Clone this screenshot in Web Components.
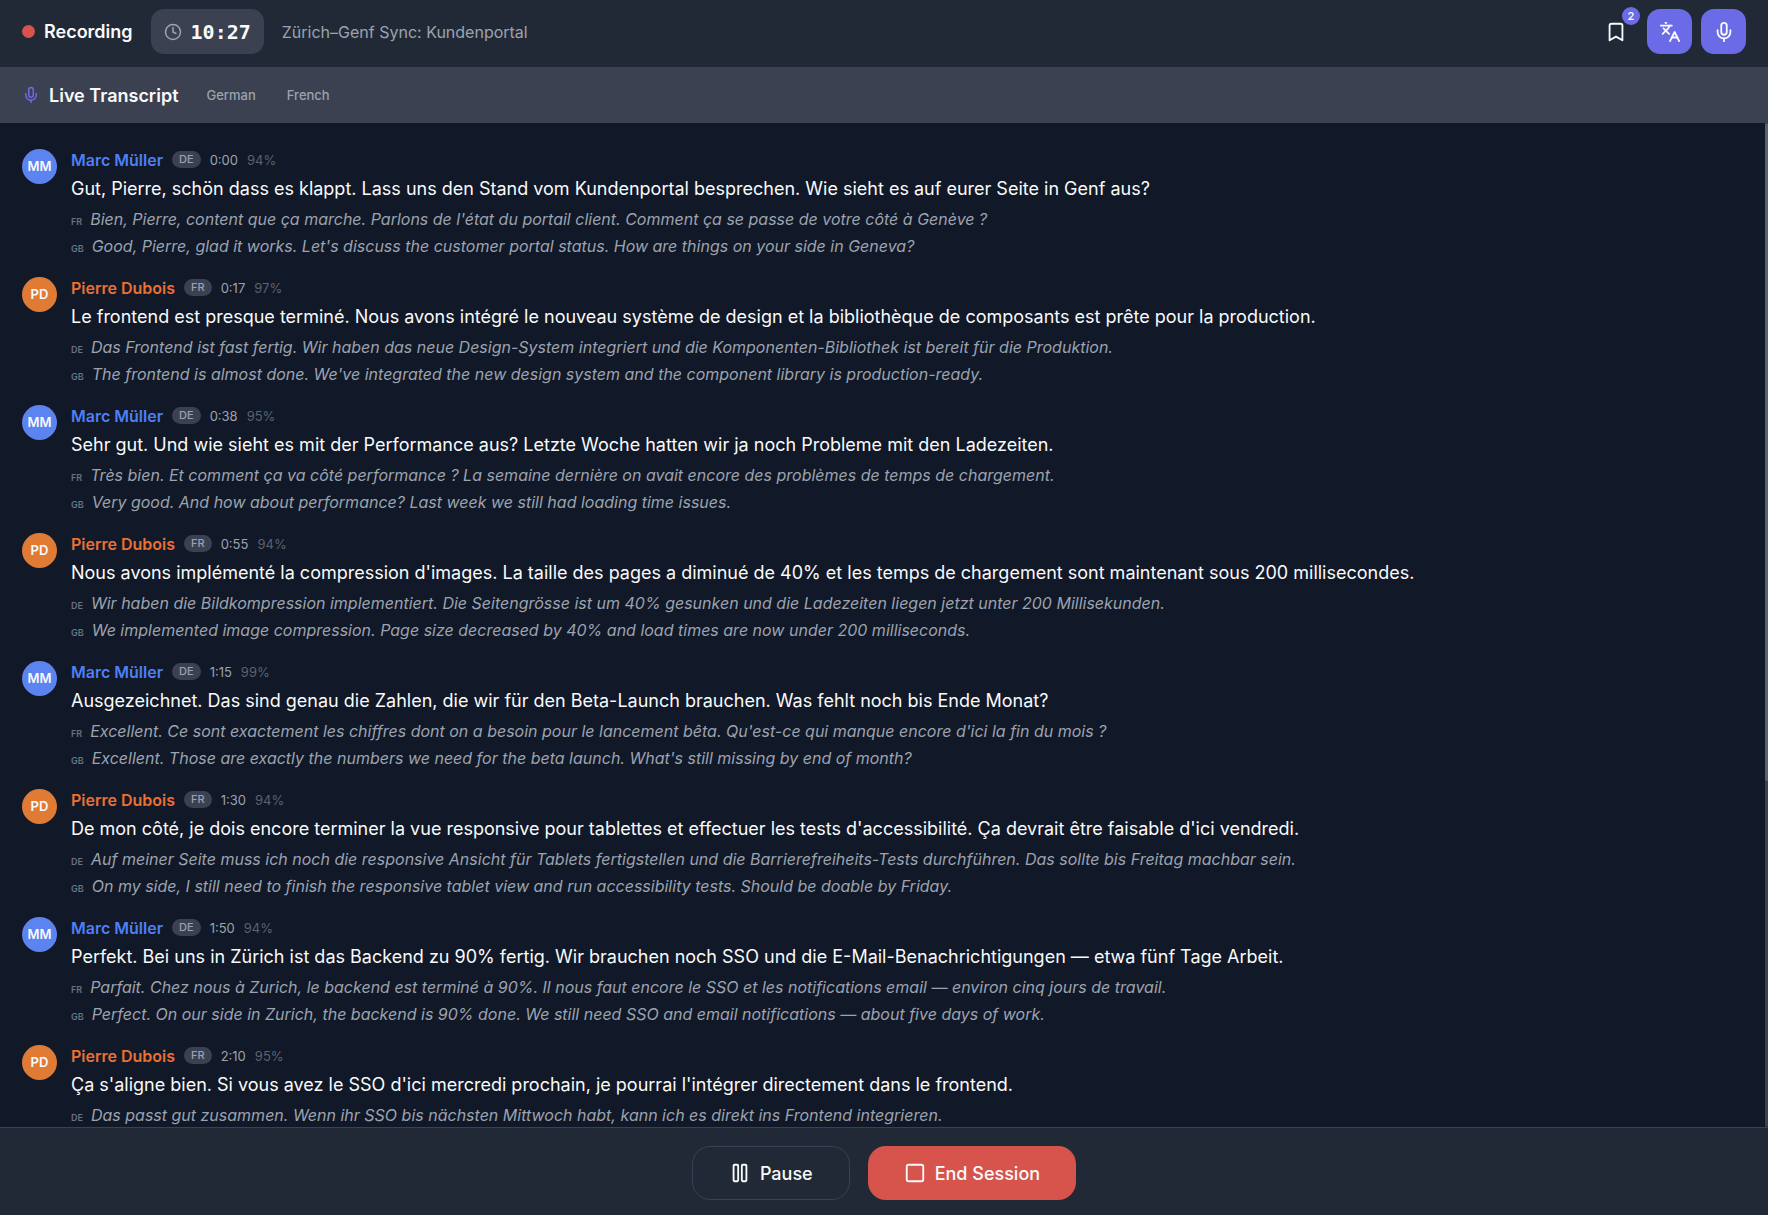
<!DOCTYPE html>
<html lang="de">
<head>
<meta charset="UTF-8">
<meta name="viewport" content="width=device-width, initial-scale=1.0">
<title>Live Transcript</title>
<style>
  :root {
    --bg: #111827;
    --surface: #222936;
    --raised: #3b4150;
    --text: #f9fafb;
    --muted: #9ca3af;
    --faint: #5b6270;
    --accent: #6b6be8;
    --danger: #d6544b;
    --blue: #5b84f0;
    --blue-text: #4f7ff5;
    --orange: #e07b35;
    --orange-text: #e97132;
  }

  body {
    margin: 0;
    background: var(--bg);
    color: var(--text);
    font-family: Inter, "Liberation Sans", sans-serif;
  }
</style>
</head>
<body>
<session-page></session-page>

<script>
const ICONS = {
  clock: '<circle cx="12" cy="12" r="10"/><path d="M12 6v6l4 2"/>',
  bookmark: '<path d="m19 21-7-4-7 4V5a2 2 0 0 1 2-2h10a2 2 0 0 1 2 2z"/>',
  languages: '<path d="m5 8 6 6"/><path d="m4 14 6-6 2-3"/><path d="M2 5h12"/><path d="M7 2h1"/><path d="m22 22-5-10-5 10"/><path d="M14 18h6"/>',
  mic: '<path d="M12 19v3"/><path d="M19 10v2a7 7 0 0 1-14 0v-2"/><rect x="9" y="2" width="6" height="13" rx="3"/>',
  pause: '<rect x="14" y="3" width="5" height="18" rx="1"/><rect x="5" y="3" width="5" height="18" rx="1"/>',
  square: '<rect x="3" y="3" width="18" height="18" rx="2"/>'
};

const ENTRIES = [
  {
    who: "marc", time: "0:00", score: "94%",
    text: "Gut, Pierre, schön dass es klappt. Lass uns den Stand vom Kundenportal besprechen. Wie sieht es auf eurer Seite in Genf aus?",
    translations: [
      ["FR", "Bien, Pierre, content que ça marche. Parlons de l'état du portail client. Comment ça se passe de votre côté à Genève ?"],
      ["GB", "Good, Pierre, glad it works. Let's discuss the customer portal status. How are things on your side in Geneva?"]
    ]
  },
  {
    who: "pierre", time: "0:17", score: "97%",
    text: "Le frontend est presque terminé. Nous avons intégré le nouveau système de design et la bibliothèque de composants est prête pour la production.",
    translations: [
      ["DE", "Das Frontend ist fast fertig. Wir haben das neue Design-System integriert und die Komponenten-Bibliothek ist bereit für die Produktion."],
      ["GB", "The frontend is almost done. We've integrated the new design system and the component library is production-ready."]
    ]
  },
  {
    who: "marc", time: "0:38", score: "95%",
    text: "Sehr gut. Und wie sieht es mit der Performance aus? Letzte Woche hatten wir ja noch Probleme mit den Ladezeiten.",
    translations: [
      ["FR", "Très bien. Et comment ça va côté performance ? La semaine dernière on avait encore des problèmes de temps de chargement."],
      ["GB", "Very good. And how about performance? Last week we still had loading time issues."]
    ]
  },
  {
    who: "pierre", time: "0:55", score: "94%",
    text: "Nous avons implémenté la compression d'images. La taille des pages a diminué de 40% et les temps de chargement sont maintenant sous 200 millisecondes.",
    translations: [
      ["DE", "Wir haben die Bildkompression implementiert. Die Seitengrösse ist um 40% gesunken und die Ladezeiten liegen jetzt unter 200 Millisekunden."],
      ["GB", "We implemented image compression. Page size decreased by 40% and load times are now under 200 milliseconds."]
    ]
  },
  {
    who: "marc", time: "1:15", score: "99%",
    text: "Ausgezeichnet. Das sind genau die Zahlen, die wir für den Beta-Launch brauchen. Was fehlt noch bis Ende Monat?",
    translations: [
      ["FR", "Excellent. Ce sont exactement les chiffres dont on a besoin pour le lancement bêta. Qu'est-ce qui manque encore d'ici la fin du mois ?"],
      ["GB", "Excellent. Those are exactly the numbers we need for the beta launch. What's still missing by end of month?"]
    ]
  },
  {
    who: "pierre", time: "1:30", score: "94%",
    text: "De mon côté, je dois encore terminer la vue responsive pour tablettes et effectuer les tests d'accessibilité. Ça devrait être faisable d'ici vendredi.",
    translations: [
      ["DE", "Auf meiner Seite muss ich noch die responsive Ansicht für Tablets fertigstellen und die Barrierefreiheits-Tests durchführen. Das sollte bis Freitag machbar sein."],
      ["GB", "On my side, I still need to finish the responsive tablet view and run accessibility tests. Should be doable by Friday."]
    ]
  },
  {
    who: "marc", time: "1:50", score: "94%",
    text: "Perfekt. Bei uns in Zürich ist das Backend zu 90% fertig. Wir brauchen noch SSO und die E-Mail-Benachrichtigungen — etwa fünf Tage Arbeit.",
    translations: [
      ["FR", "Parfait. Chez nous à Zurich, le backend est terminé à 90%. Il nous faut encore le SSO et les notifications email — environ cinq jours de travail."],
      ["GB", "Perfect. On our side in Zurich, the backend is 90% done. We still need SSO and email notifications — about five days of work."]
    ]
  },
  {
    who: "pierre", time: "2:10", score: "95%",
    text: "Ça s'aligne bien. Si vous avez le SSO d'ici mercredi prochain, je pourrai l'intégrer directement dans le frontend.",
    translations: [
      ["DE", "Das passt gut zusammen. Wenn ihr SSO bis nächsten Mittwoch habt, kann ich es direkt ins Frontend integrieren."]
    ]
  }
];

const SPEAKERS = {
  marc: { name: "Marc Müller", initials: "MM", lang: "DE", color: "blue" },
  pierre: { name: "Pierre Dubois", initials: "PD", lang: "FR", color: "orange" }
};

class UiIcon extends HTMLElement {
  connectedCallback() {
    this.attachShadow({ mode: "open" });
    this.shadowRoot.innerHTML = `
      <style>
        :host {
          display: inline-flex;
          flex: none;
          width: var(--icon-size, 22px);
          height: var(--icon-size, 22px);
        }

        svg {
          width: 100%;
          height: 100%;
          fill: none;
          stroke: currentColor;
          stroke-width: 2;
          stroke-linecap: round;
          stroke-linejoin: round;
        }
      </style>
      <svg viewBox="0 0 24 24" aria-hidden="true">${ICONS[this.getAttribute("name")]}</svg>
    `;
  }
}

class IconButton extends HTMLElement {
  connectedCallback() {
    const badge = this.getAttribute("badge");
    this.attachShadow({ mode: "open" });
    this.shadowRoot.innerHTML = `
      <style>
        :host {
          display: block;
          position: relative;
        }

        button {
          display: flex;
          align-items: center;
          justify-content: center;
          width: 45px;
          height: 45px;
          padding: 0;
          border: 0;
          border-radius: 13px;
          background: transparent;
          color: var(--text);
          cursor: pointer;
        }

        :host([active]) button {
          background: var(--accent);
        }

        .badge {
          position: absolute;
          top: -2px;
          right: -2px;
          width: 18px;
          border-radius: 9px;
          background: var(--accent);
          font-size: 11px;
          font-weight: 600;
          line-height: 18px;
          text-align: center;
        }
      </style>
      <button type="button" aria-label="${this.getAttribute("label")}">
        <ui-icon name="${this.getAttribute("icon")}"></ui-icon>
      </button>
      ${badge ? `<span class="badge">${badge}</span>` : ""}
    `;
  }
}

class SessionHeader extends HTMLElement {
  connectedCallback() {
    this.attachShadow({ mode: "open" });
    this.shadowRoot.innerHTML = `
      <style>
        :host {
          display: flex;
          align-items: center;
          justify-content: space-between;
          padding: 9px 22px 13px;
          background: var(--surface);
        }

        .info, .actions, .status, .timer {
          display: flex;
          align-items: center;
        }

        .info {
          gap: 18px;
        }

        .status {
          gap: 9px;
          font-size: 18px;
          font-weight: 600;
        }

        .dot {
          width: 13px;
          height: 13px;
          border-radius: 50%;
          background: var(--danger);
        }

        .timer {
          --icon-size: 18px;
          gap: 9px;
          height: 45px;
          padding: 0 13px;
          border-radius: 13px;
          background: var(--raised);
          color: var(--muted);
        }

        time {
          color: var(--text);
          font-family: "DejaVu Sans Mono", monospace;
          font-size: 20px;
          font-weight: 700;
        }

        .title {
          color: var(--muted);
          font-size: 16px;
        }

        .actions {
          gap: 9px;
        }
      </style>
      <div class="info">
        <div class="status"><span class="dot"></span>Recording</div>
        <div class="timer"><ui-icon name="clock"></ui-icon><time>10:27</time></div>
        <span class="title"><slot></slot></span>
      </div>
      <div class="actions">
        <icon-button icon="bookmark" label="Bookmarks" badge="2"></icon-button>
        <icon-button icon="languages" label="Translations" active></icon-button>
        <icon-button icon="mic" label="Microphone" active></icon-button>
      </div>
    `;
  }
}

class TranscriptBar extends HTMLElement {
  connectedCallback() {
    this.attachShadow({ mode: "open" });
    this.shadowRoot.innerHTML = `
      <style>
        :host {
          display: flex;
          align-items: center;
          gap: 28px;
          height: 56px;
          padding: 0 22px;
          background: var(--raised);
        }

        h1 {
          display: flex;
          align-items: center;
          gap: 9px;
          margin: 0;
          font-size: 18px;
          font-weight: 600;
        }

        ui-icon {
          --icon-size: 18px;
          color: var(--accent);
        }

        .languages {
          display: flex;
          gap: 31px;
          color: var(--muted);
          font-size: 13px;
          font-weight: 500;
        }
      </style>
      <h1><ui-icon name="mic"></ui-icon>Live Transcript</h1>
      <div class="languages">
        <span>German</span>
        <span>French</span>
      </div>
    `;
  }
}

class TranscriptEntry extends HTMLElement {
  connectedCallback() {
    const { who, time, score, text, translations } = this.entry;
    const speaker = SPEAKERS[who];
    this.attachShadow({ mode: "open" });
    this.shadowRoot.innerHTML = `
      <style>
        :host {
          display: flex;
          gap: 14px;
        }

        .avatar {
          flex: none;
          width: 35px;
          height: 35px;
          border-radius: 50%;
          background: var(--${speaker.color});
          font-size: 13px;
          font-weight: 600;
          line-height: 35px;
          text-align: center;
        }

        .meta {
          display: flex;
          align-items: center;
          gap: 9px;
          height: 21px;
          color: var(--muted);
          font-size: 13px;
        }

        .name {
          color: var(--${speaker.color}-text);
          font-size: 16px;
          font-weight: 600;
        }

        .lang {
          padding: 0 7px;
          border-radius: 9px;
          background: var(--raised);
          font-size: 11px;
          font-weight: 500;
          line-height: 17px;
        }

        .score {
          color: var(--faint);
        }

        p {
          margin: 0;
        }

        .text {
          margin: 4px 0;
          font-size: 18px;
          line-height: 29px;
        }

        .translation {
          display: flex;
          align-items: baseline;
          gap: 8px;
          margin-top: 2px;
          color: var(--muted);
          font-size: 16px;
          font-style: italic;
          line-height: 25px;
        }

        .code {
          color: #6b7280;
          font-size: 9px;
          font-style: normal;
          font-weight: 600;
          line-height: 1;
        }
      </style>
      <div class="avatar">${speaker.initials}</div>
      <div>
        <div class="meta">
          <span class="name">${speaker.name}</span>
          <span class="lang">${speaker.lang}</span>
          <time>${time}</time>
          <span class="score">${score}</span>
        </div>
        <p class="text">${text}</p>
        ${translations.map(([code, line]) => `
          <p class="translation"><span class="code">${code}</span><span>${line}</span></p>
        `).join("")}
      </div>
    `;
  }
}

class TranscriptList extends HTMLElement {
  connectedCallback() {
    this.attachShadow({ mode: "open" });
    this.shadowRoot.innerHTML = `
      <style>
        :host {
          display: flex;
          flex: 1;
          min-height: 0;
          overflow: hidden;
        }

        .entries {
          flex: 1;
          display: flex;
          flex-direction: column;
          gap: 18px;
          padding: 26px 22px 0;
        }

        .track {
          width: 3px;
          border-radius: 2px;
          background: var(--raised);
        }

        .thumb {
          height: 65.5%;
          border-radius: 2px;
          background: #5b6070;
        }
      </style>
      <div class="entries"></div>
      <div class="track"><div class="thumb"></div></div>
    `;
    const list = this.shadowRoot.querySelector(".entries");
    ENTRIES.forEach((entry) => {
      const el = document.createElement("transcript-entry");
      el.entry = entry;
      list.append(el);
    });
  }
}

class SessionControls extends HTMLElement {
  connectedCallback() {
    this.attachShadow({ mode: "open" });
    this.shadowRoot.innerHTML = `
      <style>
        :host {
          display: flex;
          justify-content: center;
          gap: 18px;
          padding: 18px 22px 15px;
          border-top: 1px solid var(--raised);
          background: var(--surface);
        }

        button {
          display: flex;
          align-items: center;
          gap: 9px;
          height: 54px;
          padding: 0 36px;
          border: 1px solid var(--raised);
          border-radius: 18px;
          background: transparent;
          color: var(--text);
          font: 500 18px Inter, "Liberation Sans", sans-serif;
          cursor: pointer;
        }

        .end {
          border: 0;
          background: var(--danger);
        }
      </style>
      <button type="button"><ui-icon name="pause"></ui-icon>Pause</button>
      <button type="button" class="end"><ui-icon name="square"></ui-icon>End Session</button>
    `;
  }
}

class SessionPage extends HTMLElement {
  connectedCallback() {
    this.attachShadow({ mode: "open" });
    this.shadowRoot.innerHTML = `
      <style>
        :host {
          display: flex;
          flex-direction: column;
          height: 100vh;
        }
      </style>
      <session-header>Zürich–Genf Sync: Kundenportal</session-header>
      <transcript-bar></transcript-bar>
      <transcript-list></transcript-list>
      <session-controls></session-controls>
    `;
  }
}

customElements.define("ui-icon", UiIcon);
customElements.define("icon-button", IconButton);
customElements.define("session-header", SessionHeader);
customElements.define("transcript-bar", TranscriptBar);
customElements.define("transcript-entry", TranscriptEntry);
customElements.define("transcript-list", TranscriptList);
customElements.define("session-controls", SessionControls);
customElements.define("session-page", SessionPage);
</script>
</body>
</html>
